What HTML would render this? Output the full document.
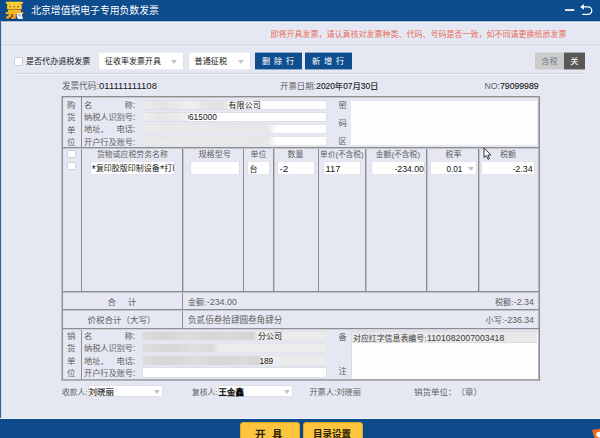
<!DOCTYPE html>
<html lang="zh-CN">
<head>
<meta charset="utf-8">
<title>北京增值税电子专用负数发票</title>
<style>
*{box-sizing:border-box;margin:0;padding:0}
html,body{width:600px;height:438px;overflow:hidden}
body{position:relative;background:#e5e8f3;font-family:"Liberation Sans","Noto Sans CJK SC",sans-serif;font-size:8px;color:#333;line-height:1}
.a{position:absolute;white-space:nowrap}
.t{position:absolute;white-space:nowrap;line-height:12px;height:12px}
.ln{position:absolute;background:#8e8e8e}
.in{position:absolute;background:#fff;border:1px solid #dcdee6;border-radius:1px}
.bl{position:absolute;background:#ebebeb;border:1px solid #e4e5ea;border-radius:1px;overflow:hidden}
.i2{border-color:#e3e5ec #dcdee6 #e3e5ec #dcdee6}
.as{font-size:11px;line-height:0;position:relative;top:2px}
.v{-webkit-text-stroke:0.120px currentColor}
.dd{border-color:#eaecf3 #dfe1e9 #eaecf3 #dfe1e9;border-radius:2px}
.tri{position:absolute;width:0;height:0;border-left:3px solid transparent;border-right:3px solid transparent;border-top:4px solid #c3c4c9}
</style>
</head>
<body>
<!-- title bar -->
<div class="a" style="left:0;top:0;width:600px;height:20px;background:#0d4c8d"></div>
<div class="a" style="left:0;top:20px;width:600px;height:1px;background:#0b4584"></div>
<div class="a" style="left:0;top:21px;width:600px;height:1px;background:#a9bbd7"></div>
<div class="a" style="left:0;top:22px;width:600px;height:1px;background:#f1f3fa"></div>
<div class="a" style="left:0;top:20px;width:1px;height:399px;background:#2f6397"></div>
<div class="a" style="left:1px;top:22px;width:1px;height:397px;background:#d3dae9"></div>
<div class="a" style="left:5px;top:-1.500px;font-size:18.500px;line-height:24px;font-weight:bold;color:#f6ad1e;-webkit-text-stroke:0.300px #f6ad1e;text-shadow:0 0.600px 0 #0a2e60">票</div>
<div class="a" style="left:5px;top:-1.500px;font-size:18.500px;line-height:24px;font-weight:bold;background:linear-gradient(#ffd836 22%,#fcc022 50%,#f49a14 85%);-webkit-background-clip:text;background-clip:text;-webkit-text-fill-color:transparent">票</div>
<svg class="a" style="left:16px;top:12px" width="8" height="8" viewBox="0 0 8 8"><path d="M0.800 1.200 H6 V4.600 L7 7 H2 L0.800 4.800 Z" fill="#eef2f8"/><path d="M1.800 2.400 H5 V4.200 H1.800 Z" fill="#b4c2d8"/></svg>
<svg class="a" style="left:564px;top:8px" width="12" height="4" viewBox="0 0 12 4"><rect x="1" y="1.200" width="9.300" height="1.700" fill="#fff"/></svg>
<svg class="a" style="left:578px;top:2px" width="16" height="16" viewBox="0 0 16 16"><path d="M4.500 4.900 H10 A3.750 3.750 0 0 1 10 12.400 H4.300" fill="none" stroke="#fff" stroke-width="1.300"/><path d="M2.200 4.900 L6 2.100 V7.700 Z" fill="#fff"/></svg>

<!-- separators -->
<div class="a" style="left:2px;top:44px;width:598px;height:1px;background:#dadde8"></div>
<div class="a" style="left:2px;top:45px;width:598px;height:1px;background:#dcdfe9"></div>
<div class="a" style="left:2px;top:46px;width:598px;height:1px;background:#eceef7"></div>
<div class="a" style="left:14px;top:73px;width:573px;height:1px;background:#d3d6e0"></div>
<div class="a" style="left:14px;top:74px;width:573px;height:1px;background:#eff0f8"></div>

<!-- toolbar -->
<div class="in" style="left:14px;top:57px;width:9px;height:9px;border-color:#cdced6"></div>
<div class="in dd" style="left:98px;top:52px;width:86px;height:18px"></div>
<div class="tri" style="left:171px;top:60px"></div>
<div class="in dd" style="left:188px;top:52px;width:63px;height:18px"></div>
<div class="tri" style="left:238px;top:60px"></div>
<div class="a" style="left:255px;top:52px;width:47px;height:18px;background:#0f4f8f;border-top:1px solid #90aacb;border-bottom:1px solid #90aacb"></div>
<div class="a" style="left:305px;top:52px;width:47px;height:18px;background:#0f4f8f;border-top:1px solid #90aacb;border-bottom:1px solid #90aacb"></div>
<div class="a" style="left:535px;top:52px;width:29px;height:18px;background:#cbcbcb;border-top:1px solid #d9dae0;border-bottom:1px solid #d9dae0"></div>
<div class="a" style="left:564px;top:52px;width:21px;height:18px;background:#585858;border-top:1px solid #a9aab0;border-bottom:1px solid #a9aab0"></div>

<!-- table frame -->
<div class="ln" style="left:61px;top:96px;width:479px;height:1px"></div>
<div class="ln" style="left:62px;top:97px;width:477px;height:1px;background:#c3c4ca"></div>
<div class="ln" style="left:61px;top:379px;width:479px;height:1px;background:#a6a6a6"></div>
<div class="ln" style="left:61px;top:380px;width:479px;height:1px;background:#b0b0b2"></div>
<div class="ln" style="left:61px;top:96px;width:1px;height:284px;background:#bfc0c5"></div>
<div class="ln" style="left:62px;top:96px;width:1px;height:284px"></div>
<div class="ln" style="left:538px;top:96px;width:1px;height:284px;background:#b4b4b6"></div>
<div class="ln" style="left:539px;top:96px;width:1px;height:285px;background:#8e8e8e"></div>
<div class="ln" style="left:62px;top:147px;width:477px;height:1px"></div>
<div class="ln" style="left:62px;top:291px;width:477px;height:1px"></div>
<div class="ln" style="left:62px;top:309px;width:477px;height:1px"></div>
<div class="ln" style="left:62px;top:328px;width:477px;height:1px"></div>
<div class="ln" style="left:81px;top:96px;width:1px;height:196px"></div>
<div class="ln" style="left:81px;top:328px;width:1px;height:51px"></div>
<div class="ln" style="left:182px;top:147px;width:1px;height:181px"></div>
<div class="ln" style="left:243px;top:147px;width:1px;height:145px"></div>
<div class="ln" style="left:273px;top:147px;width:1px;height:145px"></div>
<div class="ln" style="left:318px;top:147px;width:1px;height:145px"></div>
<div class="ln" style="left:365px;top:147px;width:1px;height:145px"></div>
<div class="ln" style="left:426px;top:147px;width:1px;height:145px"></div>
<div class="ln" style="left:478px;top:147px;width:1px;height:145px"></div>

<div class="ln" style="left:63px;top:148px;width:475px;height:1px;background:#c2c3c9"></div>
<div class="ln" style="left:63px;top:292px;width:475px;height:1px;background:#c2c3c9"></div>
<div class="ln" style="left:63px;top:310px;width:475px;height:1px;background:#c2c3c9"></div>
<div class="ln" style="left:63px;top:329px;width:475px;height:1px;background:#d0d1d7"></div>
<div class="ln" style="left:183px;top:148px;width:1px;height:143px;background:#c2c3c9"></div>
<div class="ln" style="left:274px;top:148px;width:1px;height:143px;background:#c2c3c9"></div>
<div class="ln" style="left:366px;top:148px;width:1px;height:143px;background:#c2c3c9"></div>
<div class="ln" style="left:427px;top:148px;width:1px;height:143px;background:#c2c3c9"></div>
<div class="ln" style="left:479px;top:148px;width:1px;height:143px;background:#c2c3c9"></div>

<!-- buyer fields -->
<div class="in" style="left:142px;top:100px;width:185px;height:10px"></div>
<div class="a" style="z-index:5;left:143px;top:101px;width:84.500px;height:8px;background:linear-gradient(90deg,#ececec,#e3e3e3 22%,#eaeaea 40%,#f1f1f1 55%,#e6e6e6 72%,#e1e1e1 90%,#e8e8e8)"></div>
<div class="in" style="left:142px;top:112px;width:185px;height:10px"></div>
<div class="a" style="z-index:5;left:143px;top:113px;width:44.500px;height:8px;background:linear-gradient(90deg,#eeeeee,#e5e5e5 40%,#ebebeb 75%,#f0f0f0)"></div>
<div class="bl" style="left:142px;top:124px;width:185px;height:10px;background:linear-gradient(90deg,#eaeaea 0,#e7e7e7 68%,#fff 73%)"></div>
<div class="bl" style="left:142px;top:136px;width:185px;height:10px;background:linear-gradient(90deg,#eaeaea 0,#e7e7e7 68%,#fff 73%)"></div>
<div class="in" style="left:350px;top:100px;width:188px;height:46px;border-color:#e6e8ef;background:#fdfdfd"></div>

<!-- item row -->
<div class="in" style="left:67px;top:150px;width:9px;height:8px;border-color:#d2d3da"></div>
<div class="in" style="left:67px;top:162px;width:9px;height:8px;border-color:#d2d3da"></div>
<div class="in i2" style="left:90px;top:161px;width:85px;height:14px"></div>
<div class="in i2" style="left:190px;top:161px;width:50px;height:14px"></div>
<div class="in i2" style="left:247px;top:161px;width:23px;height:14px"></div>
<div class="in i2" style="left:277px;top:161px;width:38px;height:14px"></div>
<div class="in i2" style="left:323px;top:161px;width:38px;height:14px"></div>
<div class="in i2" style="left:371px;top:161px;width:54px;height:14px"></div>
<div class="in i2" style="left:430px;top:161px;width:47px;height:14px"></div>
<div class="tri" style="left:467.500px;top:166.500px;border-top-color:#c2c2c2"></div>
<div class="in i2" style="left:481px;top:161px;width:54px;height:14px"></div>
<div class="a" style="left:91.600px;top:162.500px;width:82.400px;height:12px;overflow:hidden;line-height:12px;font-size:8px;color:#161616"><span class="as">*</span>复印胶版印制设备<span class="as">*</span>打印</div>

<!-- cursor -->
<svg class="a" style="left:483px;top:146.500px" width="10" height="14" viewBox="0 0 10 14"><path d="M1 0.800 V10.600 L3.300 8.500 L5 12.300 L6.500 11.600 L4.900 8 H8 Z" fill="#fff" stroke="#222" stroke-width="0.900" stroke-linejoin="round"/></svg>

<!-- seller fields -->
<div class="bl" style="left:142px;top:331px;width:185px;height:10px;background:linear-gradient(90deg,#dcdcdc 0,#d4d4d4 12%,#dedede 24%,#d6d6d6 36%,#dadada 48%,#d2d2d2 60%,#ececec 63%)"></div>
<div class="bl" style="left:142px;top:343px;width:185px;height:10px;background:linear-gradient(90deg,#dddddd 0,#d6d6d6 15%,#e0e0e0 28%,#d9d9d9 38%,#ececec 41%)"></div>
<div class="bl" style="left:142px;top:355px;width:185px;height:10.500px;background:linear-gradient(90deg,#dcdcdc 0,#d5d5d5 14%,#dedede 28%,#d6d6d6 42%,#dbdbdb 56%,#d4d4d4 63%,#ececec 65%)"></div>
<div class="in" style="left:142px;top:367px;width:185px;height:11px"></div>
<div class="in" style="left:351px;top:331px;width:187px;height:48px;border-color:#d9dae0 #fdfdfd #fdfdfd #d9dae0;background:#fdfdfd"></div>
<div class="a" style="left:352px;top:332px;width:185px;height:11px;background:#e9e9e9;border-bottom:1px solid #dcdcdc"></div>

<!-- footer -->
<div class="in" style="left:88px;top:385px;width:75px;height:12px"></div>
<div class="tri" style="left:154px;top:389.500px"></div>
<div class="in" style="left:218px;top:385px;width:75px;height:12px"></div>
<div class="tri" style="left:284px;top:389.500px"></div>

<!-- bottom bar -->
<div class="a" style="left:0;top:418px;width:600px;height:1px;background:#eef1f8"></div>
<div class="a" style="left:0;top:419px;width:600px;height:19px;background:#0c4a8a"></div>
<div class="a" style="left:239.500px;top:422px;width:60px;height:20px;background:#fdc53e;border-radius:3px;border:1px solid #e3a822"></div>
<div class="a" style="left:302.500px;top:422px;width:60px;height:20px;background:#fdc53e;border-radius:3px;border:1px solid #e3a822"></div>
<svg class="a" style="left:590px;top:427px" width="10" height="11" viewBox="0 0 10 11"><path d="M2 3 L10 1.500 V11 H4.500 Z" fill="#f26a21"/><ellipse cx="9.700" cy="7.600" rx="3.500" ry="2.800" fill="#fff"/></svg>

<!-- text -->
<div class="t" style="left:31.20px;top:4.50px;font-size:9.82px;color:#fff;">北京增值税电子专用负数发票</div>
<div class="t" style="left:270.50px;top:29.00px;font-size:8.00px;color:#ea6b57;">即将开具发票，请认真核对发票种类、代码、号码是否一致，如不同请更换纸质发票</div>
<div class="t" style="left:26.00px;top:56.20px;font-size:8.05px;color:#161616;">是否代办退税发票</div>
<div class="t" style="left:105.00px;top:56.40px;font-size:8.00px;color:#161616;">征收率发票开具</div>
<div class="t" style="left:194.60px;top:56.40px;font-size:8.10px;color:#161616;">普通征税</div>
<div class="t" style="left:541.50px;top:56.40px;font-size:8.00px;color:#75808c;">含税</div>
<div class="t" style="left:570.30px;top:56.40px;font-size:8.20px;color:#fff;">关</div>
<div class="t" style="left:62.00px;top:80.00px;font-size:8.56px;color:#606060;">发票代码:</div>
<div class="t" style="left:99.00px;top:80.00px;font-size:9.54px;color:#161616;">011111111108</div>
<div class="t" style="left:280.00px;top:80.00px;font-size:8.42px;color:#606060;">开票日期:</div>
<div class="t v" style="left:316.30px;top:80.00px;font-size:8.36px;color:#161616;">2020年07月30日</div>
<div class="t" style="left:484.50px;top:80.00px;font-size:8.72px;color:#606060;">NO:</div>
<div class="t v" style="left:500.00px;top:80.00px;font-size:8.68px;color:#161616;">79099989</div>
<div class="t" style="left:67.00px;top:99.00px;font-size:8.40px;color:#606060;">购</div>
<div class="t" style="left:67.00px;top:111.30px;font-size:8.40px;color:#606060;">货</div>
<div class="t" style="left:67.00px;top:123.50px;font-size:8.40px;color:#606060;">单</div>
<div class="t" style="left:67.00px;top:135.60px;font-size:8.40px;color:#606060;">位</div>
<div class="t" style="left:84.00px;top:99.00px;font-size:8.30px;color:#606060;"><span style="letter-spacing:32.3px">名</span>称:</div>
<div class="t" style="left:84.00px;top:112.30px;font-size:8.19px;color:#606060;">纳税人识别号:</div>
<div class="t" style="left:84.00px;top:123.50px;font-size:8.25px;color:#606060;">地址<span style="letter-spacing:7.8px">、</span>电话:</div>
<div class="t" style="left:84.00px;top:136.60px;font-size:8.19px;color:#606060;">开户行及账号:</div>
<div class="t" style="left:84.00px;top:330.00px;font-size:8.30px;color:#606060;"><span style="letter-spacing:32.3px">名</span>称:</div>
<div class="t" style="left:84.00px;top:343.40px;font-size:8.19px;color:#606060;">纳税人识别号:</div>
<div class="t" style="left:84.00px;top:355.60px;font-size:8.25px;color:#606060;">地址<span style="letter-spacing:7.8px">、</span>电话:</div>
<div class="t" style="left:84.00px;top:367.60px;font-size:8.19px;color:#606060;">开户行及账号:</div>
<div class="t" style="left:67.00px;top:330.00px;font-size:8.40px;color:#606060;">销</div>
<div class="t" style="left:67.00px;top:342.40px;font-size:8.40px;color:#606060;">货</div>
<div class="t" style="left:67.00px;top:354.60px;font-size:8.40px;color:#606060;">单</div>
<div class="t" style="left:67.00px;top:366.60px;font-size:8.40px;color:#606060;">位</div>
<div class="t" style="left:220.40px;top:100.00px;font-size:8.08px;color:#161616;">分有限公司</div>
<div class="t" style="left:184.30px;top:111.30px;font-size:8.40px;color:#161616;">0615000</div>
<div class="t" style="left:338.60px;top:99.00px;font-size:8.40px;color:#606060;">密</div>
<div class="t" style="left:338.60px;top:117.40px;font-size:8.40px;color:#606060;">码</div>
<div class="t" style="left:338.60px;top:134.60px;font-size:8.40px;color:#606060;">区</div>
<div class="t" style="left:97.00px;top:149.40px;font-size:7.89px;color:#606060;">货物或应税劳务名称</div>
<div class="t" style="left:198.40px;top:149.40px;font-size:8.15px;color:#606060;">规格型号</div>
<div class="t" style="left:250.40px;top:149.40px;font-size:8.00px;color:#606060;">单位</div>
<div class="t" style="left:287.60px;top:149.40px;font-size:8.00px;color:#606060;">数量</div>
<div class="t" style="left:320.00px;top:149.40px;font-size:7.69px;color:#606060;">单价(不含税)</div>
<div class="t" style="left:375.80px;top:149.40px;font-size:7.80px;color:#606060;">金额(不含税)</div>
<div class="t" style="left:445.60px;top:149.40px;font-size:8.00px;color:#606060;">税率</div>
<div class="t" style="left:500.00px;top:149.40px;font-size:8.00px;color:#606060;">税额</div>
<div class="t" style="left:249.40px;top:163.60px;font-size:8.00px;color:#161616;">台</div>
<div class="t" style="left:279.60px;top:162.80px;font-size:9.78px;color:#161616;">-2</div>
<div class="t" style="left:325.60px;top:162.80px;font-size:9.28px;color:#161616;">117</div>
<div class="t" style="left:394.40px;top:162.80px;font-size:8.73px;color:#161616;">-234.00</div>
<div class="t" style="left:446.40px;top:163.80px;font-size:8.22px;color:#161616;">0.01</div>
<div class="t" style="left:512.40px;top:162.80px;font-size:8.86px;color:#161616;">-2.34</div>
<div class="t" style="left:107.60px;top:295.60px;font-size:8.40px;color:#606060;"><span style="letter-spacing:12px">合</span>计</div>
<div class="t" style="left:188.00px;top:296.60px;font-size:8.12px;color:#606060;">金额:</div>
<div class="t" style="left:206.80px;top:295.60px;font-size:8.90px;color:#606060;">-234.00</div>
<div class="t" style="left:495.00px;top:296.60px;font-size:8.12px;color:#606060;">税额:</div>
<div class="t" style="left:513.80px;top:295.60px;font-size:8.86px;color:#606060;">-2.34</div>
<div class="t" style="left:87.60px;top:314.00px;font-size:8.50px;color:#606060;">价税合计（大写）</div>
<div class="t" style="left:188.00px;top:314.00px;font-size:8.58px;color:#606060;">负贰佰叁拾肆圆叁角肆分</div>
<div class="t" style="left:485.60px;top:315.00px;font-size:8.08px;color:#606060;">小写:</div>
<div class="t" style="left:504.30px;top:314.00px;font-size:8.76px;color:#606060;">-236.34</div>
<div class="t" style="left:258.00px;top:331.00px;font-size:8.00px;color:#161616;">分公司</div>
<div class="t" style="left:259.40px;top:355.60px;font-size:8.27px;color:#161616;">189</div>
<div class="t" style="left:338.60px;top:332.00px;font-size:8.20px;color:#606060;">备</div>
<div class="t" style="left:338.60px;top:366.00px;font-size:8.20px;color:#606060;">注</div>
<div class="t" style="left:353.00px;top:333.00px;font-size:7.91px;color:#3c3c3c;">对应红字信息表编号:</div>
<div class="t" style="left:427.00px;top:332.00px;font-size:8.77px;color:#3c3c3c;">1101082007003418</div>
<div class="t" style="left:62.00px;top:387.00px;font-size:7.75px;color:#606060;">收款人:</div>
<div class="t v" style="left:88.60px;top:386.00px;font-size:8.47px;color:#161616;">刘晓丽</div>
<div class="t" style="left:192.00px;top:387.00px;font-size:7.75px;color:#606060;">复核人:</div>
<div class="t" style="left:218.60px;top:386.00px;font-size:8.47px;color:#000;-webkit-text-stroke:0.350px #000;">王金鑫</div>
<div class="t" style="left:309.40px;top:387.00px;font-size:8.22px;color:#606060;">开票人:刘晓丽</div>
<div class="t" style="left:414.00px;top:386.00px;font-size:8.50px;color:#606060;text-spacing-trim:space-all;">销货单位：（章）</div>
<div class="t" style="left:313.00px;top:427.50px;font-size:9.50px;color:#2a2208;font-weight:bold;">目录设置</div>
<div class="t" style="left:255.00px;top:427.50px;font-size:10.50px;color:#2a2208;font-weight:bold;"><span style="letter-spacing:6.5px">开</span>具</div>
<div class="t" style="left:262.00px;top:56.30px;font-size:8.20px;color:#fff;"><span style="letter-spacing:3.8px">删除</span>行</div>
<div class="t" style="left:312.00px;top:56.30px;font-size:8.20px;color:#fff;"><span style="letter-spacing:3.8px">新增</span>行</div>
</body>
</html>
